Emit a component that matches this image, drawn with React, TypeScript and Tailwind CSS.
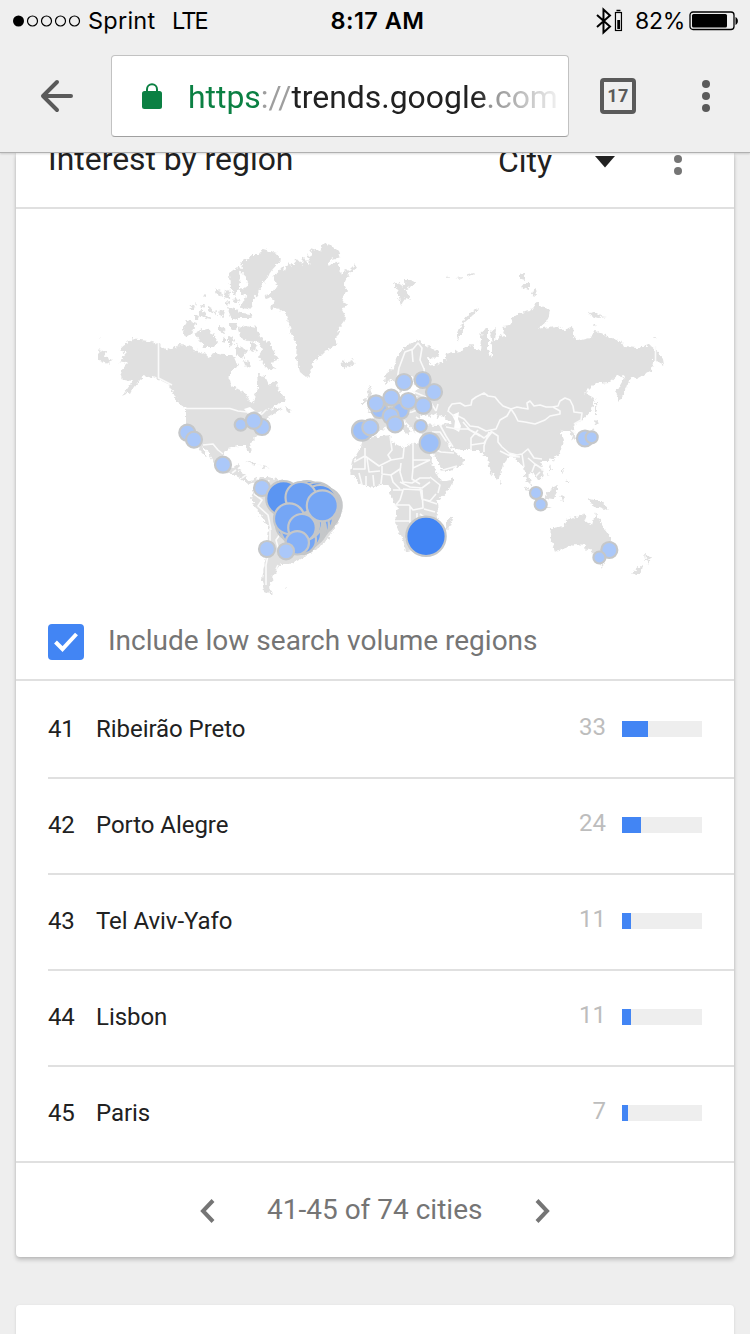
import React from "react";

const cities = [
  { rank: 41, name: "Ribeirão Preto", value: 33, bar: 26 },
  { rank: 42, name: "Porto Alegre", value: 24, bar: 19 },
  { rank: 43, name: "Tel Aviv-Yafo", value: 11, bar: 9 },
  { rank: 44, name: "Lisbon", value: 11, bar: 9 },
  { rank: 45, name: "Paris", value: 7, bar: 6 },
];

const LIGHT = "#abc8f9";

const bubbles: [number, number, number, string][] = [
  [187.3, 432.7, 8, LIGHT],
  [194, 439.6, 8, LIGHT],
  [223, 464.7, 8, LIGHT],
  [240.7, 424.7, 6, LIGHT],
  [262, 427, 8, LIGHT],
  [253.7, 420.8, 8, LIGHT],
  [262, 488, 8, LIGHT],
  [283.5, 498.5, 17.3, "#5b95f2"],
  [307, 499, 18, "#5b95f2"],
  [317, 500.5, 18, "#5b95f2"],
  [323.500, 505.5, 18.2, "#c5c7c9"],
  [320, 502, 17, "#5b95f2"],
  [322, 511, 18, "#c5c7c9"],
  [320, 511, 17, "#75a6f5"],
  [319, 517, 17, "#c5c7c9"],
  [316, 518, 17, "#75a6f5"],
  [313, 525, 16, "#75a6f5"],
  [309, 529, 17, "#c5c7c9"],
  [306, 534, 15, "#75a6f5"],
  [302, 540, 14, "#75a6f5"],
  [291, 525, 15, "#75a6f5"],
  [296, 530, 15, "#75a6f5"],
  [306, 523, 16, "#75a6f5"],
  [304, 525, 15, "#c5c7c9"],
  [301, 497.5, 15.5, "#6b9ff3"],
  [322.3, 505.8, 15.5, "#75a6f5"],
  [289.3, 518.7, 15.3, "#75a6f5"],
  [302, 527.8, 13.8, "#75a6f5"],
  [297.3, 542.8, 11.7, "#86b1f7"],
  [267, 549, 8, LIGHT],
  [286, 551.3, 8, LIGHT],
  [404, 382, 8, LIGHT],
  [422.7, 380, 8, "#9fc0f8"],
  [434, 392, 8, LIGHT],
  [379.5, 410, 8, "#9fc0f8"],
  [400.7, 410.7, 8, "#9fc0f8"],
  [390.7, 416, 8, LIGHT],
  [391.3, 397.7, 8, LIGHT],
  [376, 403.3, 8, LIGHT],
  [408.3, 401, 8, LIGHT],
  [423.3, 405.7, 8, LIGHT],
  [395.2, 424.4, 8, LIGHT],
  [362, 430.7, 10, "#9ec0f8"],
  [370.3, 427.4, 8, LIGHT],
  [420.7, 426, 6, LIGHT],
  [429.7, 443, 10, "#9ec0f8"],
  [585, 438.5, 8, LIGHT],
  [591.7, 437.3, 6, LIGHT],
  [536, 493, 6, LIGHT],
  [540.7, 504.5, 6, LIGHT],
  [609.3, 550, 8, LIGHT],
  [599.4, 557.5, 6, LIGHT],
  [426, 536.3, 19.7, "#4285f4"],
];

const land = [
  // North and Central America
  "M133 338L140 340 149 341 158 344 168 350 178 345 190 346 198 352 205 354 210 358 214 353 223 355 233 355 236 362 239 364 237 367 231 372 229 380 230 386 237 389 245 393 249 400 253 403 256 391 258 386 257 375 265 376 269 385 276 381 280 393 286 400 277 404 266 411 275 408 283 409 270 416 265 420 263 428 258 435 250 443 252 453 249 452 246 446 238 446 228 449 223 454 223 464 230 469 235 466 239 463 238 470 245 474 248 481 258 480 258 482 248 484 240 478 230 473 217 469 211 458 206 449 203 446 207 458 200 451 194 442 187 434 186 424 186 408 178 402 172 391 168 384 158 379 146 375 140 380 132 391 122 396 133 381 122 380 120 372 127 364 119 362 126 354 120 349Z",
  // South America
  "M251 481L260 477 268 477 280 480 300 487 320 494 340 503 342 511 337 523 327 541 313 551 300 559 290 564 281 564 276 570 272 580 268 588 273 595 264 591 262 580 264 566 266 556 269 527 258 512 251 499 254 490 257 483Z",
  // Greenland
  "M273 277L282 267 285 270 288 262 291 266 297 259 302 265 303 257 311 265 306 254 312 257 310 248 320 251 323 243 333 246 339 252 341 257 332 259 327 266 338 262 341 268 340 276 345 270 349 271 355 265 357 268 348 275 344 284 347 290 342 298 346 304 342 311 346 318 341 325 336 331 341 332 335 338 338 344 326 351 319 358 313 362 311 372 307 378 300 372 296 358 297 346 291 332 287 315 280 309 269 308 274 303 273 299 264 296 274 290 277 285Z",
  // Arctic islands
  "M236 267L243 268 241 262 250 258 252 254 260 254 263 249 277 253 281 260 272 270 263 283 258 295 252 300 252 306 240 306 247 297 242 290 249 285 245 277Z",
  "M231 272L237 280 240 290 233 293 230 285ZM239 303L252 305 253 310 242 308ZM234 312L251 314 252 318 236 318Z",
  "M238 328L245 325 257 327 260 337 270 343 274 352 279 359 271 362 276 370 266 368 258 357 262 350 259 342 248 340 240 338Z",
  "M187 320L197 323 192 333 186 337 183 332ZM194 334L203 329 212 332 218 342 215 347 204 347 199 340Z",
  "M229 273L239 266 241 278 236 295 230 288ZM188 309L196 302 194 309ZM197 312L203 311 208 316 200 317ZM202 297L206 295 205 298ZM214 288L221 291 222 297 217 294ZM220 309L225 311 223 318 219 315ZM219 326L226 328 223 334 219 331ZM228 307L238 310 239 320 231 318ZM230 323L237 323 236 331 230 330ZM228 336L234 338 232 346 228 344ZM236 345L247 350 243 358 236 355ZM225 289L230 291 229 298 224 296ZM213 312L217 311 217 315Z",
  "M194 315L199 316 198 319 194 318ZM208 307L212 308 213 313 208 311ZM206 317L211 316 210 320 205 319ZM234 298L239 300 237 304 233 302ZM240 288L245 291 243 296 240 295ZM250 341L258 345 256 352 250 349ZM243 360L250 362 252 368 245 366ZM222 337L226 338 226 343 222 342ZM226 301L230 302 229 305 226 304ZM201 304L205 305 203 308Z",
  "M264 414L271 413 268 418ZM285 406L291 410 287 412ZM98 349L106 352 105 356 112 360 108 364 99 360ZM99 337L101 338 100 339Z",
  "M341 360L349 362 353 360 355 363 348 368 342 366Z",
  // Eurasia
  "M385 384L386 374 393 368 397 357 405 347 418 340 428 346 438 352 439 358 428 357 430 364 436 365 446 359 444 354 460 351 471 345 480 351 481 338 482 330 488 329 488 350 492 358 492 345 490 333 496 328 495 342 500 335 506 338 502 327 510 326 512 318 520 313 530 311 537 301 541 306 550 310 548 320 538 329 555 326 564 330 572 327 573 335 578 341 590 338 595 331 610 337 621 341 624 347 637 348 650 345 656 350 663 359 664 365 657 361 653 361 652 370 638 378 630 377 627 387 619 402 616 392 625 377 618 375 610 382 595 383 585 393 594 398 592 410 583 420 575 424 573 429 576 438 573 441 570 431 563 431 560 429 564 440 560 454 548 461 540 461 544 477 537 480 532 472 528 475 533 488 526 481 524 467 518 462 512 453 503 465 498 481 491 473 487 457 478 450 461 450 453 448 446 440 449 447 455 452 466 460 460 466 444 473 439 465 433 452 431 444 431 435 418 433 421 424 437 425 449 424 452 423 443 416 437 418 435 413 429 417 422 414 418 424 415 433 409 425 402 418 407 425 411 431 407 434 398 422 387 424 382 430 371 437 358 437 354 430 358 422 373 423 374 414 368 411 381 407 392 400 391 393 395 390 397 397 408 397 415 396 416 390 424 386 414 385 413 378 408 376 405 390 399 393 397 381 391 380Z",
  "M457 343L458 333 463 321 470 313 479 307 481 309 472 316 465 322 461 334ZM394 284L399 282 402 287 406 280 411 280 416 283 411 287 406 290 411 300 406 298 401 305 398 293ZM446 277L451 276 448 278ZM456 278L463 277 459 280ZM466 274L476 273 472 277ZM520 274L524 271 526 281 520 280ZM522 283L529 283 529 290 523 288ZM532 291L536 288 537 296 531 295ZM588 312L595 311 600 316 607 317 598 318 591 316ZM653 336L657 338 654 339ZM594 324L597 326 593 327Z",
  "M367 392L372 388 371 398 374 408 367 410 370 403ZM362 399L367 398 366 404 362 404ZM368 387L371 386 369 390Z",
  "M595 397L597 411 595 416ZM594 419L599 422 595 426ZM594 427L595 437 583 441 587 437ZM547 477L551 468 550 464ZM553 461L555 457 554 463ZM500 481L502 483 500 485Z",
  // Africa
  "M363 440L373 437 390 435 392 443 405 448 412 443 430 448 432 463 437 474 442 481 455 478 449 489 437 502 438 515 429 533 425 543 416 550 406 551 403 540 398 530 395 521 397 507 390 493 390 487 384 484 373 487 362 485 350 473 352 462 361 447ZM453 515L450 526 446 533 445 525Z",
  // South-East Asia and Oceania
  "M524 486L531 490 543 505 538 504ZM545 494L557 485 557 492 553 499 546 498ZM543 505L552 508 544 508ZM560 494L565 497 562 502ZM562 466L564 472 562 474ZM566 480L570 482 568 485ZM587 498L594 500 601 500 609 510 600 508 594 507Z",
  "M552 528L563 526 567 520 572 517 578 518 583 514 587 516 585 522 592 525 596 512 602 526 611 538 613 548 608 556 600 559 593 555 589 547 585 550 586 545 576 544 563 549 555 551 553 545 551 537ZM600 564L604 564 602 568ZM645 553L651 558 647 564ZM632 574L643 564 642 570 635 575Z",
  // Caribbean
  "M244 461L254 463 261 466 252 464ZM262 465L269 467 263 468ZM284 588L287 587 285 589Z",
];

const borders = [
  "M158.500 343V378L172 385",
  "M186 408.500H230L238 411 247 412 252 416 262 414 266 410",
  "M203 445L213 444 218 450 223 454M232 473L236 470M242 478L246 475",
  "M269 480L266 490 270 500M254 494L262 500 258 506 268 515 271 530M270 528L270 545 266 565 266 585M281 533L276 540 280 555M276 569L278 565",
  "M397 380L399 368 405 352 413 349 418 343 422 348 420 360 424 369M412 350L413 362M424 368L425 382M380 408L388 414 385 422M398 408L402 414 412 412 417 410M390 399L400 405 412 406 417 396M416 417L420 420M419 386L430 388M412 391L428 398 436 411",
  "M436 411L438 404M448 412L449 408 452 404 460 403 465 406 471 405 472 400 476 397 484 393 488 396 495 397 499 402 503 406 511 409M448 411L455 417M458 416L464 419 470 426 478 427 486 431 496 429 500 420 507 416 511 409 517 407 522 408 528 409 527 403 530 401 534 406 540 405 546 407 552 407 558 406 560 401 565 398 570 400 573 406 574 412 582 413 581 420 574 424",
  "M511 409L515 415 518 421 525 422 535 424 545 420 550 416 560 414 560 411 553 407M463 422L470 430 478 434 484 438 492 431M478 430L471 438 471 450M440 425L446 436 453 447M446 427L457 429 468 429 480 436M471 445L484 443 488 437 492 432 498 436 498 442 502 447 509 453 517 455 522 454 528 449 534 458 542 459M489 432L486 440 484 446 484 452M500 451L510 456 520 457M522 454L524 467M528 458L535 464 532 472M535 464L544 470M540 472L536 476",
  "M432 432L440 432 446 441M431 448L441 452 454 453M443 470L457 466",
  "M571 430L576 434M655.500 346V361",
  "M390 436L392 450 388 455 391 460 379 466 365 456 354 462M365 448L365 469 353 469M367 458L369 472 380 471M391 460L403 458 404 448M401 463L400 472 403 482 412 483 420 478 430 478M413 443V468L430 460M413 460H430M413 468L412 479 420 484M382 466L382 474 391 475 400 469M373 475L374 486M366 476V486M359 473L362 485M382 475L381 484M391 475L393 482 400 489M400 482L410 487 422 488 430 482M420 488L422 499 430 501 436 494M393 490H403L400 500 395 506M403 489L422 490 423 508 413 510 409 505 396 505M422 499L437 504M430 477L440 485 438 493M424 509L435 512M395 521H410V506M409 522H417V513M409 525V539H405M420 514L428 520",
];

function StatusBar() {
  return (
    <div className="flex h-10 items-center pl-[13px] pr-[11px] font-['Inter',sans-serif] text-[24px] leading-none text-black">
      <div className="flex w-[318px] items-center">
        <svg width="68" height="12" viewBox="0 0 68 12" className="mt-px">
          <circle cx="5.500" cy="6" r="5.500" />
          {[19.500, 33.500, 47.500, 61.500].map((x) => (
            <circle key={x} cx={x} cy="6" r="5" fill="none" stroke="#000" strokeWidth="1.200" />
          ))}
        </svg>
        <span className="ml-[7px] mt-[2px] w-[84px] text-[23.500px] tracking-[0.25px]">Sprint</span>
        <span className="mt-[2px] text-[23.500px] tracking-[-1.900px]">LTE</span>
      </div>
      <span className="mt-[2px] w-[265px] text-[23.500px] font-semibold tracking-[0.45px]">8:17 AM</span>
      <svg width="28" height="28" viewBox="0 0 28 28" fill="none" stroke="#000" className="mt-px">
        <path d="M2 8L15 19.500 8.500 25.500V2.500L15 8.500 2 20" strokeWidth="2" />
        <rect x="20.500" y="5.500" width="6" height="18" strokeWidth="1.200" />
        <path d="M21.500 3.500h4" strokeWidth="1.500" />
        <path d="M22.300 13h2.800v9h-2.800z" fill="#000" stroke="none" />
      </svg>
      <span className="ml-[12px] mt-[2px] w-[54px] whitespace-nowrap text-[23px] tracking-[-0.3px]">82%</span>
      <svg width="50" height="20" viewBox="0 0 50 20" className="mt-px shrink-0">
        <rect x="1" y="1" width="44" height="17.500" rx="3" fill="none" stroke="#000" strokeWidth="1.300" />
        <rect x="3" y="3" width="35" height="13.500" rx="1.500" />
        <path d="M46.500 6c3.200 1.400 3.200 6.600 0 8z" />
      </svg>
    </div>
  );
}

function Toolbar() {
  return (
    <header className="relative z-10 h-[153px] border-b border-[#b0b0b0] bg-[#efefef] shadow-[0_1px_2px_rgba(0,0,0,0.15)]">
      <StatusBar />
      <div className="flex h-[112px] items-center pl-[40px] font-['Roboto',sans-serif]">
        <svg width="34" height="34" viewBox="0 0 34 34" fill="none" stroke="#5a5a5a" strokeWidth="4" strokeLinecap="round" strokeLinejoin="round">
          <path d="M31 17H4M17 3L3 17l14 14" />
        </svg>
        <div className="ml-[37px] flex h-[82px] w-[458px] items-center rounded-[4px] border border-[#c2c2c2] border-b-[#a0a0a0] bg-white pl-[30px]">
          <svg width="20" height="27" viewBox="0 0 20 27" className="shrink-0">
            <rect y="8" width="20" height="18" rx="2.500" fill="#0b8043" />
            <path d="M5 10V6.200a5 5 0 0 1 10 0V10" fill="none" stroke="#0b8043" strokeWidth="2" />
          </svg>
          <div className="ml-[26px] mt-px w-[372px] overflow-hidden whitespace-nowrap text-[31.900px] leading-[42px] text-[#212121] [mask-image:linear-gradient(to_right,#000_285px,transparent_380px)]">
            <span className="text-[#0b8043]">https</span>
            <span className="text-[#9e9e9e]">://</span>trends.google<span className="text-[#777]">.com</span>
          </div>
        </div>
        <div className="ml-[31px] flex size-9 items-center justify-center rounded-[4px] border-4 border-[#5a5a5a] text-[18px] font-bold leading-none tracking-[0.3px] text-[#5a5a5a]">
          17
        </div>
        <svg width="8" height="32" viewBox="0 0 8 32" fill="#5a5a5a" className="ml-[66px]">
          <circle cx="4" cy="4" r="4" />
          <circle cx="4" cy="16" r="4" />
          <circle cx="4" cy="28" r="4" />
        </svg>
      </div>
    </header>
  );
}

function WorldMap() {
  return (
    <svg width="718" height="395" viewBox="16 209 718 395" className="block">
      <defs>
        <filter id="coast" x="0" y="0" width="100%" height="100%">
          <feTurbulence type="fractalNoise" baseFrequency="0.28" numOctaves="2" seed="4" result="n" />
          <feDisplacementMap in="SourceGraphic" in2="n" scale="6" xChannelSelector="R" yChannelSelector="G" />
        </filter>
      </defs>
      <g fill="#e0e0e0" filter="url(#coast)">
        {land.map((d) => (
          <path key={d} d={d} />
        ))}
      </g>
      <path d="M452 415L459 412 458 419 461 426 459 432 454 429 455 421Z" fill="#fff" />
      <path d="M244 409L250 407 255 411 251 412 249 415ZM257 413L262 411 260 415Z" fill="#fff" />
      <g fill="none" stroke="#fafafa" strokeWidth="1.600" strokeLinejoin="round">
        {borders.map((d) => (
          <path key={d} d={d} />
        ))}
      </g>
      <g stroke="#c5c7c9" strokeWidth="2.200">
        {bubbles.map(([x, y, r, fill], i) => (
          <circle key={i} cx={x} cy={y} r={r} fill={fill} />
        ))}
      </g>
    </svg>
  );
}

function RegionCard() {
  return (
    <section className="h-[1104px] rounded-b-[4px] bg-white shadow-[0_3px_4px_rgba(0,0,0,0.18),0_0_3px_rgba(0,0,0,0.12)]">
      <div className="flex h-[56px] items-start overflow-hidden border-b-2 border-[#e0e0e0] pl-[32px] text-[#212121]">
        <h2 className="-mt-[14px] w-[450px] text-[31.900px] leading-[40px]">Interest by region</h2>
        <span className="-mt-[12px] w-[97px] text-[31.900px] leading-[40px]">City</span>
        <svg width="20" height="12" viewBox="0 0 20 12" className="mt-[3px]">
          <path d="M0 0h20L10 11.500z" fill="#212121" />
        </svg>
        <svg width="8" height="32" viewBox="0 0 8 32" fill="#757575" className="-mt-[4px] ml-[59px]">
          <circle cx="4" cy="-2" r="4" />
          <circle cx="4" cy="10" r="4" />
          <circle cx="4" cy="22" r="4" />
        </svg>
      </div>
      <div className="h-[472px] border-b-2 border-[#e0e0e0]">
        <WorldMap />
        <label className="flex h-[75px] items-center pl-[32px] pt-px text-[28px] text-[#757575]">
          <span className="flex size-9 items-center justify-center rounded-[4px] bg-[#4285f4]">
            <svg width="26" height="22" viewBox="0 0 26 22" fill="none" stroke="#fff" strokeWidth="4">
              <path d="M2.500 11l7 7L23.500 3" />
            </svg>
          </span>
          <span className="ml-[24px] -mt-[2px]">Include low search volume regions</span>
        </label>
      </div>
      <ul className="pt-[2px]">
        {cities.map((c, i) => (
          <li
            key={c.rank}
            className={
              i === cities.length - 1
                ? "border-b-2 border-[#e0e0e0] pl-[32px]"
                : "ml-[32px] border-b-2 border-[#e0e0e0]"
            }
          >
            <div className="flex h-[94px] items-center pb-[2px] pr-[32px] text-[24px] text-[#212121]">
              <span className="w-[48px] tracking-[-0.2px]">{c.rank}</span>
              <span className="flex-1 tracking-[-0.05px]">{c.name}</span>
              <span className="mr-[16px] -mt-[4px] text-[#bdbdbd]">{c.value}</span>
              <div className="h-4 w-20 bg-[#eee]">
                <div className="h-4 bg-[#4285f4]" style={{ width: c.bar }} />
              </div>
            </div>
          </li>
        ))}
      </ul>
      <div className="flex h-[94px] items-center pl-[184px] text-[28px] text-[#757575]">
        <svg width="15" height="24" viewBox="0 0 15 24" fill="none" stroke="#757575" strokeWidth="4" className="mt-[2px]">
          <path d="M13 1.500L3 12l10 10.500" />
        </svg>
        <span className="ml-[52px] w-[216px] whitespace-nowrap">41-45 of 74 cities</span>
        <svg width="15" height="24" viewBox="0 0 15 24" fill="none" stroke="#757575" strokeWidth="4" className="ml-[52px] mt-[2px]">
          <path d="M2 1.500L12 12 2 22.500" />
        </svg>
      </div>
    </section>
  );
}

export default function App() {
  return (
    <div className="h-[1334px] w-[750px] overflow-hidden bg-[#eee] font-['Roboto',sans-serif]">
      <Toolbar />
      <main className="flex flex-col gap-[48px] px-[16px]">
        <RegionCard />
        <section className="h-[60px] rounded-[4px] bg-white shadow-[0_1px_3px_rgba(0,0,0,0.12)]" />
      </main>
    </div>
  );
}
